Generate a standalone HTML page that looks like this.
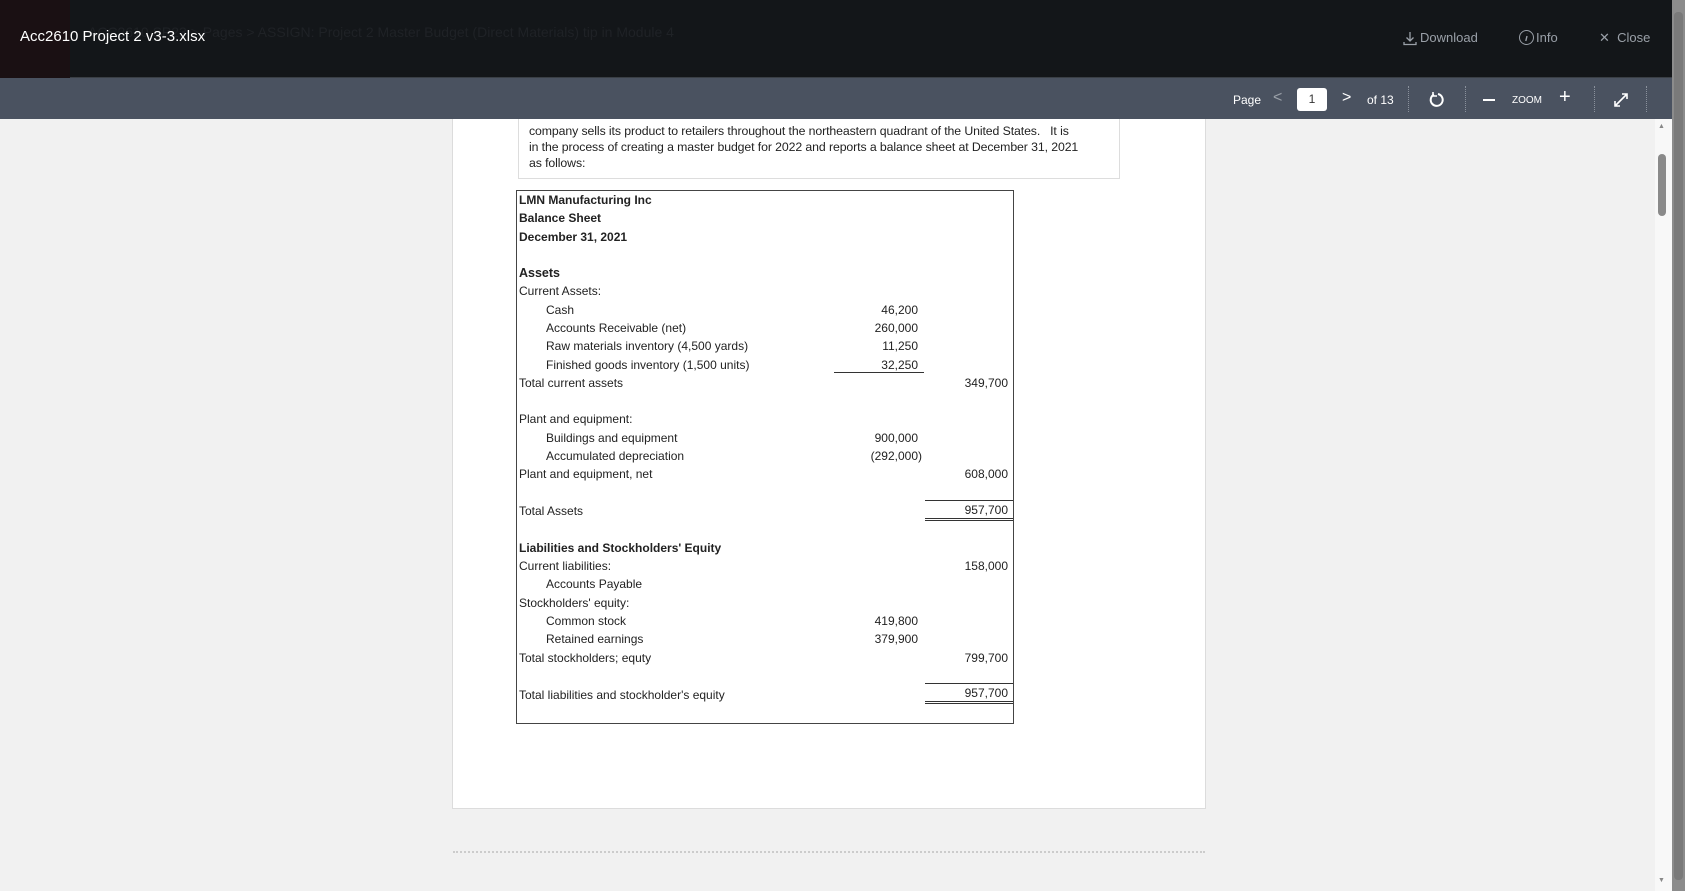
<!DOCTYPE html>
<html><head><meta charset="utf-8"><style>
*{margin:0;padding:0;box-sizing:border-box}
body{width:1685px;height:891px;overflow:hidden;background:#f1f1f1;font-family:"Liberation Sans",sans-serif;position:relative}
.top{position:absolute;left:0;top:0;width:1672px;height:78px;background:#131619;border-bottom:1px solid #3a3f45;z-index:5}
.logo{position:absolute;left:0;top:0;width:70px;height:78px;background:#1a1013}
.title{position:absolute;left:20px;top:28px;color:#fff;font-size:15px}
.ghost{position:absolute;left:88px;top:24px;color:#1f2226;font-size:14px}
.tl{position:absolute;top:30px;color:#9aa0a8;font-size:13px}
.bar{position:absolute;left:0;top:78px;width:1672px;height:41px;background:#4a5260;z-index:5}
.bt{position:absolute;color:#fff;font-size:12px;top:93px;z-index:6}
.sep{position:absolute;top:86px;height:26px;border-left:1px dotted #8a919c;z-index:6}
.page{position:absolute;left:452px;top:119px;width:754px;height:690px;background:#fff;border:1px solid #dcdcdc;border-top:none}
.tb{position:absolute;left:518px;top:119px;width:602px;height:60px;border:1px solid #ddd;border-top:none}
.tb p{position:absolute;left:10px;font-size:12.3px;color:#222;white-space:nowrap;letter-spacing:-0.1px}
.tab{position:absolute;left:516px;top:190px;width:498px;height:534px;border:1.5px solid #444}
.r{position:absolute;left:2px;font-size:12px;color:#222;white-space:nowrap;line-height:18px}
.i{left:29px}
.b{font-weight:bold}
.n1{position:absolute;font-size:12px;color:#222;line-height:18px;width:100px;text-align:right;left:301px}
.n2{position:absolute;font-size:12px;color:#222;line-height:18px;width:100px;text-align:right;left:391px}
.ul{position:absolute;border-top:1px solid #333}
.dl{position:absolute;border-top:3px double #333}
.sb{position:absolute;left:1655px;top:119px;width:17px;height:772px;background:#f8f8f8}
</style></head><body>
<div class="top"><div class="logo"></div>
<div class="ghost">ACC2610 SP23 &gt; Pages &gt; ASSIGN: Project 2 Master Budget (Direct Materials) tip in Module 4</div>
<div class="title">Acc2610 Project 2 v3-3.xlsx</div>
<svg style="position:absolute;left:1402px;top:30px" width="16" height="17" viewBox="0 0 16 17"><path d="M8 2v9M4.5 7.5L8 11l3.5-3.5M2 12v2.5h12V12" stroke="#9aa0a8" fill="none" stroke-width="1.3"/></svg>
<div class="tl" style="left:1420px">Download</div>
<svg style="position:absolute;left:1518px;top:29px" width="17" height="17" viewBox="0 0 17 17"><circle cx="8.5" cy="8.5" r="7" stroke="#9aa0a8" fill="none"/><path d="M9 7l-1.2 5M9.3 4.6v.1" stroke="#9aa0a8" stroke-width="1.4"/></svg>
<div class="tl" style="left:1536px">Info</div>
<div class="tl" style="left:1599px">✕&nbsp; Close</div>
</div>
<div class="bar"></div>
<div class="bt" style="left:1233px">Page</div>
<div class="bt" style="left:1273px;font-size:16px;top:89px;color:#9aa0a8">&lt;</div>
<div style="position:absolute;left:1297px;top:88px;width:30px;height:23px;background:#fff;border-radius:3px;font-size:12px;text-align:center;line-height:23px;color:#333;z-index:6">1</div>
<div class="bt" style="left:1342px;font-size:16px;top:89px">&gt;</div>
<div class="bt" style="left:1367px">of 13</div>
<div class="sep" style="left:1408px"></div>
<svg style="position:absolute;left:1428px;top:91px;z-index:6" width="18" height="18" viewBox="0 0 18 18"><path d="M6 3.5A6 6 0 1 0 10 3" stroke="#fff" fill="none" stroke-width="2"/><path d="M5 1v4h4" stroke="#fff" fill="none" stroke-width="1.6"/></svg>
<div class="sep" style="left:1465px"></div>
<div style="position:absolute;left:1483px;top:99px;width:12px;height:2px;background:#fff;z-index:6"></div>
<div class="bt" style="left:1512px;font-size:10px;top:95px">ZOOM</div>
<div class="bt" style="left:1559px;font-size:20px;top:86px">+</div>
<div class="sep" style="left:1594px"></div>
<svg style="position:absolute;left:1613px;top:92px;z-index:6" width="16" height="16" viewBox="0 0 16 16"><path d="M2 14L14 2M9 2h5v5M2 9v5h5" stroke="#fff" fill="none" stroke-width="1.6"/></svg>
<div class="sep" style="left:1646px"></div>

<div class="page"></div>
<div class="tb">
<p style="top:5px">company sells its product to retailers throughout the northeastern quadrant of the United States.&nbsp;&nbsp; It is</p>
<p style="top:21px">in the process of creating a master budget for 2022 and reports a balance sheet at December 31, 2021</p>
<p style="top:37px">as follows:</p>
</div>
<div class="tab">
<div class="r b" style="top:0">LMN Manufacturing Inc</div>
<div class="r b" style="top:18.3px">Balance Sheet</div>
<div class="r b" style="top:36.5px">December 31, 2021</div>
<div class="r b" style="top:73px;font-size:12.5px">Assets</div>
<div class="r" style="top:91.3px">Current Assets:</div>
<div class="r i" style="top:109.6px">Cash</div><div class="n1" style="top:109.6px">46,200</div>
<div class="r i" style="top:128px">Accounts Receivable (net)</div><div class="n1" style="top:128px">260,000</div>
<div class="r i" style="top:146px">Raw materials inventory (4,500 yards)</div><div class="n1" style="top:146px">11,250</div>
<div class="r i" style="top:164.5px">Finished goods inventory (1,500 units)</div><div class="n1" style="top:164.5px">32,250</div>
<div class="ul" style="left:317px;width:90px;top:181px"></div>
<div class="r" style="top:183px">Total current assets</div><div class="n2" style="top:183px">349,700</div>
<div class="r" style="top:219px">Plant and equipment:</div>
<div class="r i" style="top:237.5px">Buildings and equipment</div><div class="n1" style="top:237.5px">900,000</div>
<div class="r i" style="top:256px">Accumulated depreciation</div><div class="n1" style="top:256px;left:305px">(292,000)</div>
<div class="r" style="top:274px">Plant and equipment, net</div><div class="n2" style="top:274px">608,000</div>
<div class="ul" style="left:408px;width:88px;top:309px"></div>
<div class="r" style="top:311px">Total Assets</div><div class="n2" style="top:310px">957,700</div>
<div class="dl" style="left:408px;width:88px;top:327px"></div>
<div class="r b" style="top:348px">Liabilities and Stockholders' Equity</div>
<div class="r" style="top:366px">Current liabilities:</div><div class="n2" style="top:366px">158,000</div>
<div class="r i" style="top:384px">Accounts Payable</div>
<div class="r" style="top:402.5px">Stockholders' equity:</div>
<div class="r i" style="top:421px">Common stock</div><div class="n1" style="top:421px">419,800</div>
<div class="r i" style="top:439px">Retained earnings</div><div class="n1" style="top:439px">379,900</div>
<div class="r" style="top:457.5px">Total stockholders; equty</div><div class="n2" style="top:457.5px">799,700</div>
<div class="ul" style="left:408px;width:88px;top:492px"></div>
<div class="r" style="top:494.5px">Total liabilities and stockholder's equity</div><div class="n2" style="top:493px">957,700</div>
<div class="dl" style="left:408px;width:88px;top:510px"></div>
</div>
<div style="position:absolute;left:453px;top:851px;width:752px;border-top:2px dotted #ccc"></div>
<div class="sb"><div style="position:absolute;left:3px;top:35px;width:8px;height:62px;background:#8a8a8a;border-radius:4px"></div>
<div style="position:absolute;left:3px;top:4px;font-size:7px;color:#888">▲</div>
<div style="position:absolute;left:3px;top:758px;font-size:7px;color:#888">▼</div></div>
<div style="position:absolute;left:1672px;top:0;width:13px;height:891px;background:#8c8c8c"></div>
<div style="position:absolute;left:1674px;top:12px;width:9px;height:868px;background:#7a7a7a;border-radius:4px"></div>
</body></html>
